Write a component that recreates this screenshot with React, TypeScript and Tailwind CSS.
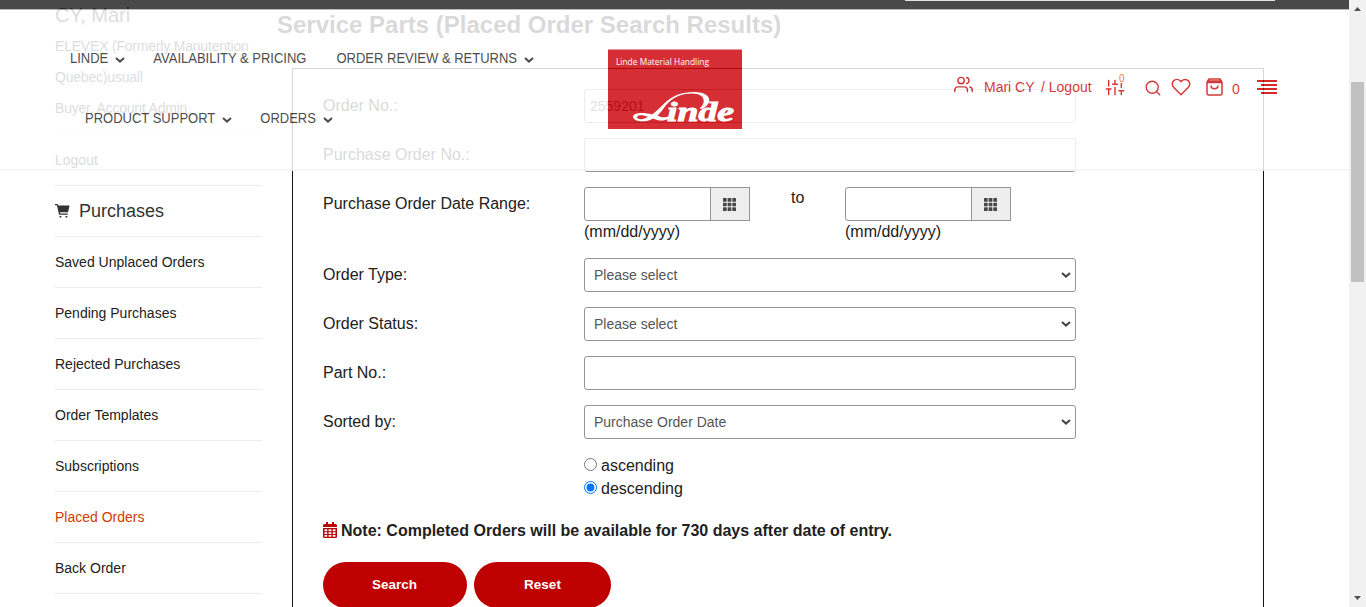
import React from "react";
import { FiUsers, FiSliders, FiSearch, FiHeart } from "react-icons/fi";

const Chevron = ({ className = "" }: { className?: string }) => (
  <svg className={className} width="10" height="6" viewBox="0 0 10 6" fill="none" stroke="currentColor" strokeWidth="2">
    <path d="M1 0.9 L5 4.6 L9 0.9" />
  </svg>
);

const SidebarItem = ({ label, active = false }: { label: string; active?: boolean }) => (
  <li className="flex h-[51px] items-center border-b border-[#ebebeb]">
    <a className={active ? "text-[#d13b00]" : "text-[#222]"}>{label}</a>
  </li>
);

const CartIcon = () => (
  <svg width="15" height="14" viewBox="0 0 15 14" fill="#333">
    <path d="M0 0h2.6l.7 1.5H14.6L13 8.2H4.9l.3 1.3h7.6v1.2H4.1L1.9 1.3H0z" />
    <path d="M4.500 12h1.800v1.500H4.500zM10.500 12h1.800v1.500h-1.800z" />
  </svg>
);

const CalendarIcon = () => (
  <svg width="14" height="16" viewBox="0 0 14 16" fill="#be0000">
    <path d="M3 0h2v2h4V0h2v2h1.5A1.5 1.5 0 0 1 14 3.500V5H0V3.500A1.500 1.500 0 0 1 1.500 2H3z" />
    <path
      fillRule="evenodd"
      d="M0 6h14v8.500a1.500 1.500 0 0 1-1.500 1.500h-11A1.500 1.500 0 0 1 0 14.500zM1.500 7.300v1.900h2.700V7.300zM5.600 7.300v1.900h2.800V7.300zM9.800 7.300v1.900h2.700V7.300zM1.500 10.300v1.700h2.700v-1.700zM5.600 10.300v1.700h2.800v-1.700zM9.800 10.300v1.700h2.700v-1.700zM1.500 13.100v1.600h2.700v-1.600zM5.600 13.100v1.600h2.800v-1.600zM9.800 13.100v1.600h2.700v-1.600z"
    />
  </svg>
);

const Sidebar = () => (
  <aside className="ml-[55px] w-[207px] shrink-0 text-[14px] leading-[31px] text-[#333]">
    <h3 className="h-[31px] text-[20px] leading-[31px]">CY, Mari</h3>
    <div className="h-[104px] border-b border-[#e7e7e7] tracking-[-0.2px] whitespace-nowrap text-[#333]">
      <p>ELEVEX (Formerly Manutention</p>
      <p>Quebec)usuall</p>
      <p>Buyer, Account Admin</p>
    </div>
    <ul>
      <SidebarItem label="Logout" />
      <li className="flex h-[51px] items-center gap-[9px] border-b border-[#ebebeb] text-[18px] text-[#333]">
        <CartIcon />
        Purchases
      </li>
      <SidebarItem label="Saved Unplaced Orders" />
      <SidebarItem label="Pending Purchases" />
      <SidebarItem label="Rejected Purchases" />
      <SidebarItem label="Order Templates" />
      <SidebarItem label="Subscriptions" />
      <SidebarItem label="Placed Orders" active />
      <SidebarItem label="Back Order" />
    </ul>
  </aside>
);

const Field = ({ label, children }: { label: string; children: React.ReactNode }) => (
  <div className="mb-[15px] flex h-[34px]">
    <label className="w-[261px] shrink-0 pt-[5px] leading-[23px]">{label}</label>
    {children}
  </div>
);

const TextInput = ({ value = "" }: { value?: string }) => (
  <input
    defaultValue={value}
    className="h-[34px] w-[492px] rounded-[3px] border border-[#949494] bg-white px-[5px] text-[14px] text-[#444] outline-none"
  />
);

const SelectBox = ({ value }: { value: string }) => (
  <div className="relative w-[492px]">
    <select className="h-[34px] w-full appearance-none rounded-[3px] border border-[#949494] bg-white px-[9px] text-[14px] text-[#555] outline-none">
      <option>{value}</option>
    </select>
    <Chevron className="absolute top-[14px] right-[5px] text-[#444]" />
  </div>
);

const dots = [0, 5, 10];
const DateInput = () => (
  <div className="w-[166px]">
    <div className="flex h-[34px]">
      <input className="h-[34px] w-[127px] rounded-l-[3px] border border-[#949494] bg-white outline-none" />
      <span className="-ml-px flex h-[34px] w-[40px] items-center justify-center border border-[#949494] bg-[#eee] pt-px pr-px">
        <svg width="13" height="13" viewBox="0 0 14 14" fill="#484848">
          {dots.map((x) => dots.map((y) => <rect key={`${x}-${y}`} x={x} y={y} width="4" height="4" rx="0.4" />))}
        </svg>
      </span>
    </div>
    <div className="h-[22px] leading-[22px]">(mm/dd/yyyy)</div>
  </div>
);

const Main = () => (
  <main className="ml-[15px] w-[987px] shrink-0 text-[16px] text-[#212121]">
    <h1 className="h-[68px] pt-[10px] text-[24px] leading-[30px] font-bold whitespace-nowrap text-[#222]">
      Service Parts (Placed Order Search Results)
    </h1>
    <section className="ml-[15px] h-[600px] w-[972px] border border-[#111] pt-[20px] pl-[30px]">
      <Field label="Order No.:">
        <TextInput value="2559201" />
      </Field>
      <Field label="Purchase Order No.:">
        <TextInput />
      </Field>
      <div className="flex h-[71px]">
        <label className="w-[261px] pt-[5px] leading-[23px]">Purchase Order Date Range:</label>
        <DateInput />
        <span className="w-[95px] pl-[41px] leading-[22px]">to</span>
        <DateInput />
      </div>
      <Field label="Order Type:">
        <SelectBox value="Please select" />
      </Field>
      <Field label="Order Status:">
        <SelectBox value="Please select" />
      </Field>
      <Field label="Part No.:">
        <TextInput />
      </Field>
      <Field label="Sorted by:">
        <SelectBox value="Purchase Order Date" />
      </Field>
      <div className="ml-[261px] leading-[23px]">
        <label className="flex h-[23px] items-center gap-1">
          <input type="radio" name="sort" className="mb-[3px] h-[13px] w-[13px]" />
          ascending
        </label>
        <label className="flex h-[23px] items-center gap-1">
          <input type="radio" name="sort" defaultChecked className="mb-[3px] h-[13px] w-[13px]" />
          descending
        </label>
      </div>
      <p className="mt-[19px] flex h-[23px] items-center gap-[4px] font-bold">
        <span className="-mt-px">
          <CalendarIcon />
        </span>
        Note: Completed Orders will be available for 730 days after date of entry.
      </p>
      <div className="mt-[20px] flex gap-[7px] text-[13.5px] font-bold text-white">
        <button className="h-[46px] w-[144px] rounded-full bg-[#be0000] pr-px">Search</button>
        <button className="h-[46px] w-[137px] rounded-full bg-[#be0000]">Reset</button>
      </div>
    </section>
  </main>
);

const NavItem = ({ label, arrow = true }: { label: string; arrow?: boolean }) => (
  <a className="flex items-center gap-[7px] whitespace-nowrap">
    <span className="mt-px inline-block scale-y-[1.08]">{label}</span>
    {arrow && <Chevron className="mt-[2px]" />}
  </a>
);

const Logo = () => (
  <svg width="134" height="80" viewBox="0 0 134 80" className="mt-[49px] shrink-0">
    <rect y="0.5" width="134" height="79.5" fill="#cd050d" />
    <text x="8" y="15.500" fontSize="9" fill="#fff" fontFamily="Open Sans" textLength="93" lengthAdjust="spacingAndGlyphs">
      Linde Material Handling
    </text>
    <text x="59" y="72" fontSize="27" fontWeight="bold" fontStyle="italic" fill="#fff" stroke="#fff" strokeWidth="0.9" fontFamily="Liberation Serif" textLength="67" lengthAdjust="spacingAndGlyphs">
      inde
    </text>
    <path
      fill="#fff"
      d="M94 60 C102 56 103 50 99 46.500 C94 42 80 42 70 45.500 C58 50 52 60 44 65.500 C37 63.500 26 63 25 67.500 C25 73 38 74 45 69.500 C50 71.500 55 73 61 69.500 L60 67.500 C57 69 53 68.500 49.500 66.500 C55 62 59 51 71 46.700 C80 43.700 90 43.500 94 47.500 C97 51 96 56 91.500 59.500Z M40 67.800 C36 71 29 71 29 68 C30 65.500 35 66 40 67.800Z"
      fillRule="evenodd"
    />
  </svg>
);

const BagIcon = () => (
  <svg width="17" height="18" viewBox="0 0 17 18" fill="none" stroke="currentColor" strokeWidth="1.5" strokeLinejoin="round">
    <path d="M1 4.200 3 1H14L16 4.200V15.500a1.400 1.400 0 0 1-1.400 1.400H2.400A1.400 1.400 0 0 1 1 15.500ZM1 4.500H16M2 3H15M5 7.500c0 4.200 7 4.200 7 0" />
  </svg>
);

const Header = () => (
  <header className="absolute inset-x-0 top-0 flex h-[171px] flex-col border-b-2 border-[#f3f3f3] bg-white text-[14px] text-[#222] opacity-[0.83]">
    <div className="flex h-[9px] shrink-0 justify-end bg-[#252525] pr-[74px]">
      <div className="h-px w-[370px] bg-[#ddd]" />
    </div>
    <div className="h-px shrink-0 bg-[#aaa]" />
    <div className="-mt-[10px] flex">
      <nav className="w-[608px] shrink-0 pt-[48px] text-[13px] leading-[20px] text-[#2a2a2a]">
        <div className="flex h-[60px] items-start pl-[70px]">
          <NavItem label="LINDE" />
          <div className="ml-[28px]">
            <NavItem label="AVAILABILITY & PRICING" arrow={false} />
          </div>
          <div className="ml-[30px]">
            <NavItem label="ORDER REVIEW & RETURNS" />
          </div>
        </div>
        <div className="flex gap-[28px] pl-[85px]">
          <NavItem label="PRODUCT SUPPORT" />
          <NavItem label="ORDERS" />
        </div>
      </nav>
      <Logo />
      <div className="mt-[75px] ml-[212px] flex h-[24px] items-center whitespace-nowrap text-[#cb1111]">
        <FiUsers className="mb-[5px] h-[19px] w-[19px]" strokeWidth={1.8} />
        <span className="ml-[11px] w-[57px]">Mari CY</span>
        <span className="w-[64px]">/ Logout</span>
        <span className="relative">
          <FiSliders className="mt-px h-[19px] w-[20px]" strokeWidth={1.8} />
          <span className="absolute -top-[3px] left-[14px] bg-white text-[10px] leading-[9px] text-[#e85d16]">0</span>
        </span>
        <FiSearch className="mt-[2px] ml-[19px] h-[18px] w-[18px]" strokeWidth={1.8} />
        <FiHeart className="ml-[9px] h-[20px] w-[20px]" strokeWidth={1.8} />
        <span className="mb-[1px] ml-[15px]">
          <BagIcon />
        </span>
        <span className="mt-[4px] ml-[9px]">0</span>
        <svg className="ml-[17px]" width="20" height="15" viewBox="0 0 20 15" fill="#c90000">
          <path d="M0 0h20v2H0zM4 4h16v2H4zM0 8h20v2H0zM4 12h16v2H4z" />
        </svg>
      </div>
    </div>
  </header>
);

export default function App() {
  return (
    <div className="flex h-[607px] w-[1366px] overflow-hidden bg-white font-['Liberation_Sans',Arial,sans-serif]">
      <div className="relative h-[607px] w-[1349px] shrink-0 overflow-hidden">
        <div className="flex">
          <Sidebar />
          <Main />
        </div>
        <Header />
      </div>
      <div className="flex w-[17px] flex-col items-center bg-[#f1f1f1] pr-px">
        <svg className="mt-[7px]" width="7" height="4" viewBox="0 0 7 4" fill="#505050">
          <path d="M0 4 3.5 0 7 4z" />
        </svg>
        <div className="mt-[71px] h-[200px] w-[13px] bg-[#c1c1c1]" />
        <svg className="mt-auto mb-[7px]" width="7" height="4" viewBox="0 0 7 4" fill="#505050">
          <path d="M0 0 3.5 4 7 0z" />
        </svg>
      </div>
    </div>
  );
}
